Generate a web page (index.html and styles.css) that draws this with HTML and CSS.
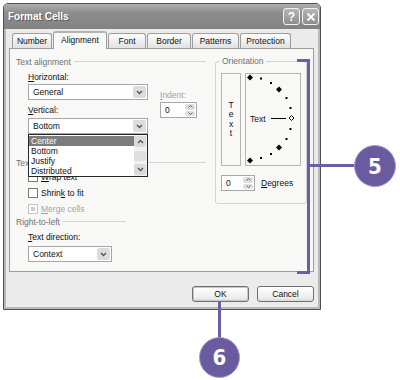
FILE: index.html
```html
<!DOCTYPE html>
<html lang="en">
<head>
    <meta charset="UTF-8">
    <title>Format Cells</title>
    <link rel="stylesheet" href="styles.css">
</head>
<body>
    <div class="window">
        <div class="titlebar">
            <span class="title">Format Cells</span>
            <span class="cap-btn">?</span>
            <span class="cap-btn">
                <svg width="10" height="10" viewBox="0 0 10 10"><path d="M1.5 1.5l7 7M8.5 1.5l-7 7" stroke="#fff" stroke-width="1.8"/></svg>
            </span>
        </div>
        <div class="client">
            <div class="tabs">
                <div class="tab">Number</div>
                <div class="tab active">Alignment</div>
                <div class="tab">Font</div>
                <div class="tab">Border</div>
                <div class="tab">Patterns</div>
                <div class="tab">Protection</div>
            </div>
            <div class="panel">
                <div class="col-left">
                    <div class="legend"><span>Text alignment</span></div>
                    <div class="align-grid">
                        <div class="fields">
                            <div class="label label-first"><u>H</u>orizontal:</div>
                            <div class="select">
                                <span class="select-text">General</span>
                                <span class="select-btn"><svg width="7" height="5" viewBox="0 0 7 5"><path d="M1 1l2.5 2.5L6 1" fill="none" stroke="#555" stroke-width="1.4"/></svg></span>
                            </div>
                            <div class="label"><u>V</u>ertical:</div>
                            <div class="select-wrap">
                                <div class="select">
                                    <span class="select-text">Bottom</span>
                                    <span class="select-btn"><svg width="7" height="5" viewBox="0 0 7 5"><path d="M1 1l2.5 2.5L6 1" fill="none" stroke="#555" stroke-width="1.4"/></svg></span>
                                </div>
                                <div class="droplist">
                                    <ul class="items">
                                        <li class="picked">Center</li>
                                        <li>Bottom</li>
                                        <li>Justify</li>
                                        <li>Distributed</li>
                                    </ul>
                                    <div class="scrollbar">
                                        <span class="sb-btn"><svg width="7" height="5" viewBox="0 0 7 5"><path d="M1 4l2.5-2.5L6 4" fill="none" stroke="#555" stroke-width="1.4"/></svg></span>
                                        <span class="sb-thumb"></span>
                                        <span class="sb-btn"><svg width="7" height="5" viewBox="0 0 7 5"><path d="M1 1l2.5 2.5L6 1" fill="none" stroke="#555" stroke-width="1.4"/></svg></span>
                                    </div>
                                </div>
                            </div>
                        </div>
                        <div class="indent">
                            <div class="label disabled"><u>I</u>ndent:</div>
                            <div class="spin">
                                <span class="spin-val">0</span>
                                <span class="spin-btns">
                                    <span><svg width="5" height="3" viewBox="0 0 5 3"><path d="M0.5 2.5l2-2 2 2" fill="none" stroke="#666" stroke-width="1"/></svg></span>
                                    <span><svg width="5" height="3" viewBox="0 0 5 3"><path d="M0.5 0.5l2 2 2-2" fill="none" stroke="#666" stroke-width="1"/></svg></span>
                                </span>
                            </div>
                        </div>
                    </div>

                    <div class="legend legend-control"><span>Text control</span></div>
                    <div class="check check-wrap"><span class="box"></span><span><u>W</u>rap text</span></div>
                    <div class="check"><span class="box"></span><span>Shrin<u>k</u> to fit</span></div>
                    <div class="check disabled"><span class="box box-off"></span><span><u>M</u>erge cells</span></div>

                    <div class="legend legend-rtl"><span>Right-to-left</span></div>
                    <div class="fields">
                        <div class="label label-dir"><u>T</u>ext direction:</div>
                        <div class="select select-short">
                            <span class="select-text">Context</span>
                            <span class="select-btn"><svg width="7" height="5" viewBox="0 0 7 5"><path d="M1 1l2.5 2.5L6 1" fill="none" stroke="#555" stroke-width="1.4"/></svg></span>
                        </div>
                    </div>
                </div>

                <div class="col-right">
                    <fieldset class="orient">
                        <legend>Orientation</legend>
                        <div class="orient-boxes">
                            <div class="vtext">
                                <span>T</span><span>e</span><span>x</span><span>t</span>
                            </div>
                            <div class="dial">
                                <svg width="54" height="91" viewBox="0 0 54 91">
                                    <g fill="#000">
                                        <path d="M4 0.5l3 3-3 3-3-3z"/>
                                        <path d="M33 12.5l3 3-3 3-3-3z"/>
                                        <path d="M33 70.5l3 3-3 3-3-3z"/>
                                        <path d="M4 83.5l3 3-3 3-3-3z"/>
                                        <rect x="14" y="3.5" width="2" height="2"/>
                                        <rect x="24" y="8" width="2" height="2"/>
                                        <rect x="39.5" y="23" width="2" height="2"/>
                                        <rect x="43.5" y="33" width="2" height="2"/>
                                        <rect x="43.5" y="54" width="2" height="2"/>
                                        <rect x="39.5" y="64" width="2" height="2"/>
                                        <rect x="24" y="79" width="2" height="2"/>
                                        <rect x="14" y="83" width="2" height="2"/>
                                        <rect x="25" y="44" width="15" height="1"/>
                                    </g>
                                    <path d="M45.5 41.5l2.5 2.5-2.5 2.5-2.5-2.5z" fill="#fff" stroke="#000" stroke-width="1"/>
                                    <text x="4" y="47.5" class="dial-text">Text</text>
                                </svg>
                            </div>
                        </div>
                        <div class="degrees">
                            <div class="spin spin-deg">
                                <span class="spin-val">0</span>
                                <span class="spin-btns">
                                    <span><svg width="5" height="3" viewBox="0 0 5 3"><path d="M0.5 2.5l2-2 2 2" fill="none" stroke="#666" stroke-width="1"/></svg></span>
                                    <span><svg width="5" height="3" viewBox="0 0 5 3"><path d="M0.5 0.5l2 2 2-2" fill="none" stroke="#666" stroke-width="1"/></svg></span>
                                </span>
                            </div>
                            <span class="deg-label"><u>D</u>egrees</span>
                        </div>
                    </fieldset>
                </div>
            </div>
            <div class="buttons">
                <div class="btn btn-default">OK</div>
                <div class="btn">Cancel</div>
            </div>
        </div>
    </div>

    <!-- callouts -->
    <div class="bracket"></div>
    <div class="lead lead-5"></div>
    <div class="badge badge-5">5</div>
    <div class="lead lead-6"></div>
    <div class="badge badge-6">6</div>
</body>
</html>
```

FILE: styles.css
```css
* {
    box-sizing: border-box;
}
body {
    margin: 0;
    width: 400px;
    height: 380px;
    overflow: hidden;
    position: relative;
    background: #fff;
    font-family: "Liberation Sans", Arial, sans-serif;
    font-size: 8.5px;
    color: #111;
}
u {
    text-decoration: underline;
}

/* window frame */
.window {
    margin: 3px 0 0 3px;
    width: 318px;
    height: 307px;
    border: 1px solid #4e4e4e;
    border-radius: 5px 5px 0 0;
    background: #ebebeb;
    box-shadow: inset 0 0 0 2px #b9b9b9;
}
.titlebar {
    height: 25px;
    display: flex;
    align-items: center;
    padding: 0 1px 0 4px;
    border-radius: 4px 4px 0 0;
    background: linear-gradient(#b0b0b0, #8d8d8d 35%, #828282);
}
.title {
    flex: 1;
    color: #fff;
    font-size: 10px;
    font-weight: bold;
    text-shadow: 1px 1px 0 #5a5a5a;
}
.cap-btn {
    width: 17px;
    height: 17px;
    margin-left: 2px;
    display: flex;
    align-items: center;
    justify-content: center;
    border: 1px solid #f2f2f2;
    border-radius: 3px;
    background: linear-gradient(#b6b6b6, #8e8e8e);
    color: #fff;
    font-size: 12px;
    font-weight: bold;
}

.client {
    padding: 2px 6px 0 5px;
}

/* tabs */
.tabs {
    display: flex;
    align-items: flex-end;
    height: 17px;
    margin-left: 3px;
}
.tab {
    height: 15px;
    margin-right: 1px;
    border: 1px solid #9d9d9d;
    border-bottom: none;
    border-radius: 3px 3px 0 0;
    background: linear-gradient(#fdfdfd, #e2e2e2);
    text-align: center;
    line-height: 14px;
}
.tab:nth-child(1) { width: 40px; }
.tab:nth-child(2) { width: 54px; }
.tab:nth-child(3) { width: 38px; }
.tab:nth-child(4) { width: 44px; }
.tab:nth-child(5) { width: 47px; }
.tab:nth-child(6) { width: 51px; }
.tab.active {
    height: 18px;
    margin-bottom: -1px;
    position: relative;
    background: #f8f8f7;
    border-top: 2px solid #b5b5b5;
    line-height: 15px;
}

.panel {
    height: 224px;
    display: flex;
    padding: 7px 6px 0 6px;
    border: 1px solid #9c9c9c;
    background: #f8f8f7;
}
.col-left {
    width: 199px;
}
.col-right {
    width: 92px;
}

/* group legends */
.legend {
    display: flex;
    align-items: center;
    height: 11px;
    margin-right: 9px;
    color: #707070;
}
.legend::after {
    content: "";
    flex: 1;
    height: 1px;
    margin-left: 3px;
    background: #d3d3d3;
}
.legend-control {
    margin-top: 23px;
}
.legend-rtl {
    margin-top: 2px;
    margin-right: 89px;
}

.label {
    height: 11px;
    line-height: 11px;
    margin-top: 5px;
}
.label-first {
    margin-top: 5px;
}
.disabled {
    color: #a4a4a4;
}

.align-grid {
    display: flex;
}
.fields {
    width: 120px;
    margin-left: 12px;
}
.indent {
    margin-left: 12px;
    padding-top: 18px;
}

/* combo boxes */
.select {
    height: 16px;
    margin-top: 1px;
    display: flex;
    align-items: stretch;
    border: 1px solid #a7a7a7;
    background: #fff;
}
.select-text {
    flex: 1;
    padding-left: 4px;
    line-height: 14px;
}
.select-btn {
    width: 13px;
    margin: 1px;
    display: flex;
    align-items: center;
    justify-content: center;
    border-radius: 2px;
    background: #dcdcdc;
}
.select-wrap {
    position: relative;
    margin-top: 2px;
}
.select-wrap .select {
    margin-top: 0;
}
.select-short {
    width: 84px;
    margin-top: 3px;
}

.droplist {
    position: absolute;
    top: 16px;
    left: 0;
    width: 120px;
    height: 43px;
    display: flex;
    border: 1px solid #262626;
    background: #fff;
    z-index: 2;
}
.items {
    flex: 1;
    margin: 0;
    padding: 1px 0 0;
    list-style: none;
}
.items li {
    height: 10px;
    line-height: 10px;
    padding-left: 2px;
}
.items li.picked {
    background: #7c7c7c;
    color: #fff;
}
.scrollbar {
    width: 13px;
    display: flex;
    flex-direction: column;
    padding: 1px 1px 1px 0;
    background: #f1f1f1;
}
.sb-btn {
    height: 11px;
    display: flex;
    align-items: center;
    justify-content: center;
    border-radius: 2px;
    background: #dadada;
}
.sb-thumb {
    height: 10px;
    margin: 4px 0 auto;
    border-radius: 2px;
    background: #dedede;
}

/* spin boxes */
.spin {
    width: 37px;
    height: 16px;
    margin-top: 1px;
    display: flex;
    border: 1px solid #a7a7a7;
    background: #fff;
}
.spin-val {
    flex: 1;
    padding-left: 4px;
    line-height: 14px;
}
.spin-btns {
    width: 10px;
    margin: 1px;
    display: flex;
    flex-direction: column;
    gap: 1px;
}
.spin-btns span {
    flex: 1;
    display: flex;
    align-items: center;
    justify-content: center;
    border-radius: 2px;
    background: #dedede;
}
.spin-deg {
    width: 34px;
    margin-top: 0;
}

/* check boxes */
.check {
    display: flex;
    align-items: center;
    gap: 3px;
    height: 11px;
    margin: 5px 0 0 12px;
}
.check-wrap {
    margin-top: 3px;
}
.box {
    width: 10px;
    height: 10px;
    border: 1px solid #7a7a7a;
    background: #fff;
}
.box-off {
    border-color: #c4c4c4;
    background: #fff;
    box-shadow: inset 0 0 0 2px #fff, inset 0 0 0 4px #cfcfcf;
}

.label-dir {
    margin-top: 5px;
}

/* orientation group */
.orient {
    margin: 0;
    padding: 0 5px 12px 5px;
    border: 1px solid #d3d3d3;
    border-radius: 3px;
}
.orient legend {
    padding: 0 2px;
    margin-left: -1px;
    height: 11px;
    line-height: 11px;
    color: #707070;
}
.orient-boxes {
    display: flex;
    gap: 4px;
    margin-top: 6px;
}
.vtext {
    width: 20px;
    height: 93px;
    display: flex;
    flex-direction: column;
    align-items: center;
    justify-content: center;
    border: 1px solid #b4b4b4;
    line-height: 9.5px;
}
.dial {
    width: 56px;
    height: 93px;
    border: 1px solid #b4b4b4;
}
.dial svg {
    display: block;
}
.dial-text {
    font-family: "Liberation Sans", Arial, sans-serif;
    font-size: 8.5px;
    fill: #111;
}
.degrees {
    display: flex;
    align-items: center;
    margin-top: 9px;
}
.deg-label {
    margin-left: 6px;
}

/* dialog buttons */
.buttons {
    display: flex;
    justify-content: flex-end;
    gap: 8px;
    margin-top: 14px;
}
.btn {
    width: 57px;
    height: 16px;
    border: 1px solid #6f6f6f;
    border-radius: 3px;
    background: linear-gradient(#ffffff, #ececec 80%, #d8d8d8);
    text-align: center;
    line-height: 14px;
}
.btn-default {
    box-shadow: inset 0 0 0 1px #c8c8c8;
}

/* callouts over the screenshot */
.bracket {
    position: absolute;
    left: 297px;
    top: 59px;
    width: 13px;
    height: 215px;
    border: 3px solid #6c5ea4;
    border-left: none;
}
.lead {
    position: absolute;
    background: #6c5ea4;
}
.lead-5 {
    left: 310px;
    top: 164px;
    width: 46px;
    height: 3px;
}
.lead-6 {
    left: 218px;
    top: 302px;
    width: 3px;
    height: 36px;
}
.badge {
    position: absolute;
    width: 42px;
    height: 42px;
    display: flex;
    align-items: center;
    justify-content: center;
    border: 1px solid #a79dd0;
    border-radius: 50%;
    background: #6a5a9f;
    color: #fff;
    font-family: "Liberation Sans Narrow", "DejaVu Sans Condensed", sans-serif;
    font-stretch: condensed;
    font-size: 22px;
    font-weight: bold;
}
.badge-5 {
    left: 354px;
    top: 145px;
}
.badge-6 {
    left: 199px;
    top: 337px;
    width: 41px;
    height: 41px;
}
```
